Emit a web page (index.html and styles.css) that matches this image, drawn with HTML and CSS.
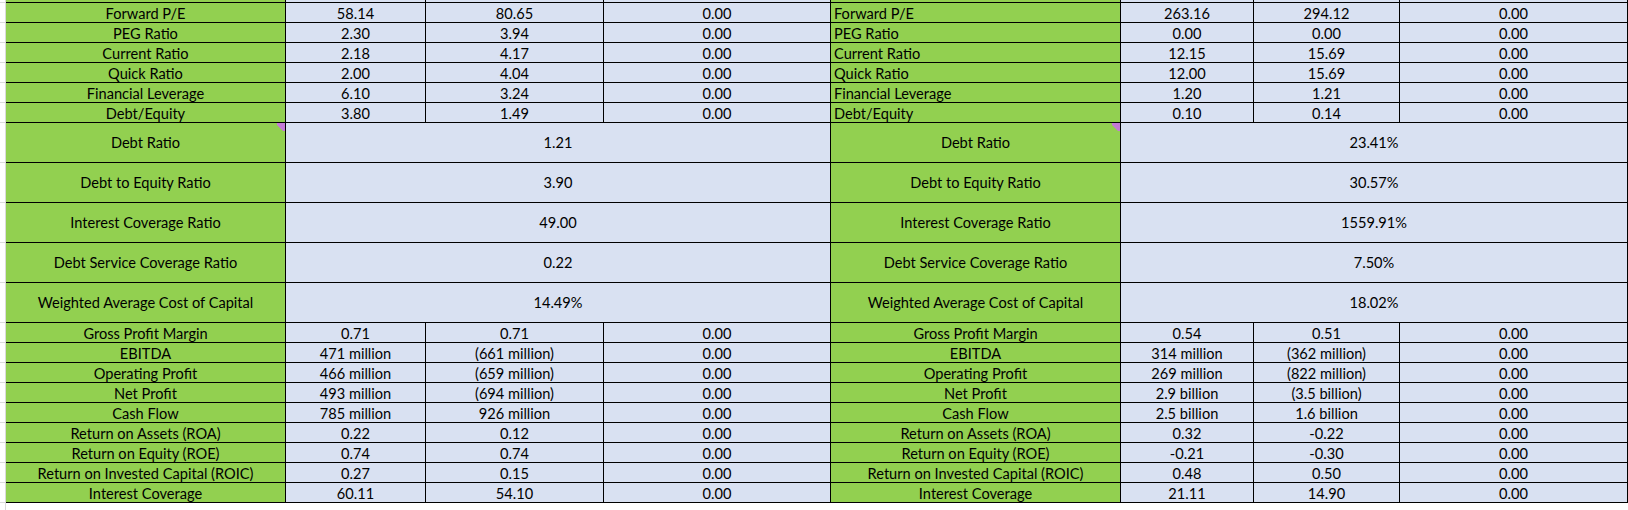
FILE: index.html
```html
<!DOCTYPE html>
<html>
<head>
<meta charset="utf-8">
<link rel="stylesheet" href="styles.css">
</head>
<body>
<div class="sheet">
  <div class="row top-stub">
    <div class="c gutter"></div><div class="c g"></div><div class="c b"></div><div class="c b"></div><div class="c b"></div><div class="c g"></div><div class="c b"></div><div class="c b"></div><div class="c b"></div>
  </div>

  <div class="row"><div class="c gutter"></div><div class="c g">Forward P/E</div><div class="c b">58.14</div><div class="c b">80.65</div><div class="c b">0.00</div><div class="c g left">Forward P/E</div><div class="c b">263.16</div><div class="c b">294.12</div><div class="c b">0.00</div></div>
  <div class="row"><div class="c gutter"></div><div class="c g">PEG Ratio</div><div class="c b">2.30</div><div class="c b">3.94</div><div class="c b">0.00</div><div class="c g left">PEG Ratio</div><div class="c b">0.00</div><div class="c b">0.00</div><div class="c b">0.00</div></div>
  <div class="row"><div class="c gutter"></div><div class="c g">Current Ratio</div><div class="c b">2.18</div><div class="c b">4.17</div><div class="c b">0.00</div><div class="c g left">Current Ratio</div><div class="c b">12.15</div><div class="c b">15.69</div><div class="c b">0.00</div></div>
  <div class="row"><div class="c gutter"></div><div class="c g">Quick Ratio</div><div class="c b">2.00</div><div class="c b">4.04</div><div class="c b">0.00</div><div class="c g left">Quick Ratio</div><div class="c b">12.00</div><div class="c b">15.69</div><div class="c b">0.00</div></div>
  <div class="row"><div class="c gutter"></div><div class="c g">Financial Leverage</div><div class="c b">6.10</div><div class="c b">3.24</div><div class="c b">0.00</div><div class="c g left">Financial Leverage</div><div class="c b">1.20</div><div class="c b">1.21</div><div class="c b">0.00</div></div>
  <div class="row"><div class="c gutter"></div><div class="c g">Debt/Equity</div><div class="c b">3.80</div><div class="c b">1.49</div><div class="c b">0.00</div><div class="c g left">Debt/Equity</div><div class="c b">0.10</div><div class="c b">0.14</div><div class="c b">0.00</div></div>

  <div class="row tall"><div class="c gutter"></div><div class="c g note">Debt Ratio<span class="flag"></span></div><div class="c b span3">1.21</div><div class="c g note">Debt Ratio<span class="flag"></span></div><div class="c b span3">23.41%</div></div>
  <div class="row tall"><div class="c gutter"></div><div class="c g">Debt to Equity Ratio</div><div class="c b span3">3.90</div><div class="c g">Debt to Equity Ratio</div><div class="c b span3">30.57%</div></div>
  <div class="row tall"><div class="c gutter"></div><div class="c g">Interest Coverage Ratio</div><div class="c b span3">49.00</div><div class="c g">Interest Coverage Ratio</div><div class="c b span3">1559.91%</div></div>
  <div class="row tall"><div class="c gutter"></div><div class="c g">Debt Service Coverage Ratio</div><div class="c b span3">0.22</div><div class="c g">Debt Service Coverage Ratio</div><div class="c b span3">7.50%</div></div>
  <div class="row tall"><div class="c gutter"></div><div class="c g">Weighted Average Cost of Capital</div><div class="c b span3">14.49%</div><div class="c g">Weighted Average Cost of Capital</div><div class="c b span3">18.02%</div></div>

  <div class="row"><div class="c gutter"></div><div class="c g">Gross Profit Margin</div><div class="c b">0.71</div><div class="c b">0.71</div><div class="c b">0.00</div><div class="c g">Gross Profit Margin</div><div class="c b">0.54</div><div class="c b">0.51</div><div class="c b">0.00</div></div>
  <div class="row"><div class="c gutter"></div><div class="c g">EBITDA</div><div class="c b">471 million</div><div class="c b">(661 million)</div><div class="c b">0.00</div><div class="c g">EBITDA</div><div class="c b">314 million</div><div class="c b">(362 million)</div><div class="c b">0.00</div></div>
  <div class="row"><div class="c gutter"></div><div class="c g">Operating Profit</div><div class="c b">466 million</div><div class="c b">(659 million)</div><div class="c b">0.00</div><div class="c g">Operating Profit</div><div class="c b">269 million</div><div class="c b">(822 million)</div><div class="c b">0.00</div></div>
  <div class="row"><div class="c gutter"></div><div class="c g">Net Profit</div><div class="c b">493 million</div><div class="c b">(694 million)</div><div class="c b">0.00</div><div class="c g">Net Profit</div><div class="c b">2.9 billion</div><div class="c b">(3.5 billion)</div><div class="c b">0.00</div></div>
  <div class="row"><div class="c gutter"></div><div class="c g">Cash Flow</div><div class="c b">785 million</div><div class="c b">926 million</div><div class="c b">0.00</div><div class="c g">Cash Flow</div><div class="c b">2.5 billion</div><div class="c b">1.6 billion</div><div class="c b">0.00</div></div>
  <div class="row"><div class="c gutter"></div><div class="c g">Return on Assets (ROA)</div><div class="c b">0.22</div><div class="c b">0.12</div><div class="c b">0.00</div><div class="c g">Return on Assets (ROA)</div><div class="c b">0.32</div><div class="c b">-0.22</div><div class="c b">0.00</div></div>
  <div class="row"><div class="c gutter"></div><div class="c g">Return on Equity (ROE)</div><div class="c b">0.74</div><div class="c b">0.74</div><div class="c b">0.00</div><div class="c g">Return on Equity (ROE)</div><div class="c b">-0.21</div><div class="c b">-0.30</div><div class="c b">0.00</div></div>
  <div class="row"><div class="c gutter"></div><div class="c g">Return on Invested Capital (ROIC)</div><div class="c b">0.27</div><div class="c b">0.15</div><div class="c b">0.00</div><div class="c g">Return on Invested Capital (ROIC)</div><div class="c b">0.48</div><div class="c b">0.50</div><div class="c b">0.00</div></div>
  <div class="row"><div class="c gutter"></div><div class="c g">Interest Coverage</div><div class="c b">60.11</div><div class="c b">54.10</div><div class="c b">0.00</div><div class="c g">Interest Coverage</div><div class="c b">21.11</div><div class="c b">14.90</div><div class="c b">0.00</div></div>

  <div class="row tail"><div class="c gutter"></div></div>
</div>
</body>
</html>
```

FILE: styles.css
```css
* { box-sizing: border-box; }
html, body { margin: 0; padding: 0; background: #ffffff; }
body {
  font-family: Lato, "Liberation Sans", sans-serif;
  font-size: 14.6px;
  color: #000000;
  width: 1628px;
  height: 510px;
  overflow: hidden;
}
.sheet { display: flex; flex-direction: column; }
.row {
  display: grid;
  grid-template-columns: 6px 280px 140px 178px 227px 290px 133px 146px 228px;
  height: 20px;
}
.row.top-stub { height: 3px; }
.row.tall { height: 40px; }
.row.tail { height: 8px; }
.c {
  border-right: 1px solid #000;
  border-bottom: 1px solid #000;
  display: flex;
  align-items: center;
  justify-content: center;
  white-space: nowrap;
  overflow: hidden;
  line-height: 19px;
  padding-top: 1px;
  position: relative;
}
.c.gutter {
  background: #ffffff;
  border-right: 1px solid #dadada;
  border-bottom: 1px solid #dadada;
}
.tail .c.gutter { border-bottom: none; }
.g { background: #92d050; }
.b { background: #d9e1f2; }
.left { justify-content: flex-start; padding-left: 3px; }
.span3 { grid-column: span 3; }
.tall .c { padding-top: 0; }
.flag {
  position: absolute;
  top: 0;
  right: 0;
  width: 8px;
  height: 8px;
  background: #c47ad6;
  clip-path: polygon(0 0, 100% 0, 100% 100%, 75% 100%, 0 25%);
}
```
